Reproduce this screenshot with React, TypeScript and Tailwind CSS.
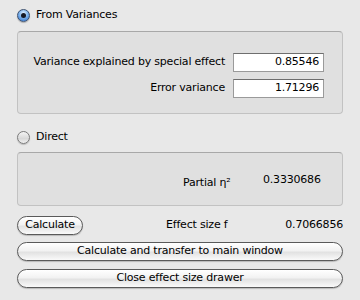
import React from "react";

const font = { fontFamily: '"DejaVu Sans", sans-serif' };

function Radio({ checked }: { checked: boolean }) {
  return checked ? (
    <div className="w-[13px] h-[13px] rounded-full border border-[#3d5170] bg-[radial-gradient(circle_at_50%_30%,#e2f1ff_0%,#7eb4ee_45%,#2a6cc8_100%)] flex items-center justify-center shadow-[0_1px_1px_rgba(0,0,0,0.25)]">
      <div className="w-[5px] h-[5px] rounded-full bg-[#141826]" />
    </div>
  ) : (
    <div className="w-[13px] h-[13px] rounded-full border border-[#7a7a7a] bg-[linear-gradient(#f4f4f4,#d8d8d8_60%,#f0f0f0)] shadow-[0_1px_1px_rgba(0,0,0,0.2)]" />
  );
}

function Field({ value }: { value: string }) {
  return (
    <div className="w-[91px] h-[19px] bg-white border border-[#9a9a9a] border-t-[#6e6e6e] flex items-center justify-end pr-[4px] text-black">
      {value}
    </div>
  );
}

function Pill({ children, className }: { children: React.ReactNode; className?: string }) {
  return (
    <div
      className={
        "h-[19px] rounded-full border border-[#5a5a5a] bg-[linear-gradient(#ffffff,#f2f2f2_45%,#e2e2e2_55%,#fafafa)] flex items-center justify-center text-black whitespace-nowrap shadow-[0_1px_1px_rgba(0,0,0,0.2)] " +
        (className ?? "")
      }
    >
      {children}
    </div>
  );
}

export default function App() {
  return (
    <div style={font} className="w-[360px] h-[300px] bg-[#e8e8e8] px-[17px] pt-[8px] text-black text-[11px] tracking-[-0.2px] whitespace-nowrap">
      <div className="flex items-center gap-[6px] h-[14px]">
        <Radio checked />
        <span>From Variances</span>
      </div>
      <div className="mt-[9px] h-[83px] rounded-[4px] border border-[#c2c2c2] border-t-[#a8a8a8] bg-[#e0e0e0] flex flex-col pt-[21px] gap-[7px]">
        <div className="flex items-center h-[19px]">
          <div className="w-[207px] text-right">Variance explained by special effect</div>
          <div className="ml-[8px]">
            <Field value="0.85546" />
          </div>
        </div>
        <div className="flex items-center h-[19px]">
          <div className="w-[207px] text-right">Error variance</div>
          <div className="ml-[8px]">
            <Field value="1.71296" />
          </div>
        </div>
      </div>
      <div className="flex items-center gap-[6px] h-[14px] mt-[16px]">
        <Radio checked={false} />
        <span>Direct</span>
      </div>
      <div className="mt-[8px] h-[54px] rounded-[4px] border border-[#c2c2c2] border-t-[#a8a8a8] bg-[#e0e0e0] flex items-start pt-[19px]">
        <div className="ml-[165px] w-[80px] mt-[3px]">Partial η²</div>
        <div>0.3330686</div>
      </div>
      <div className="flex items-center mt-[10px] h-[18px]">
        <Pill className="w-[66px]">Calculate</Pill>
        <div className="ml-[83px]">Effect size f</div>
        <div className="ml-auto">0.7066856</div>
      </div>
      <Pill className="mt-[8px] w-full">Calculate and transfer to main window</Pill>
      <Pill className="mt-[8px] w-full">Close effect size drawer</Pill>
    </div>
  );
}
